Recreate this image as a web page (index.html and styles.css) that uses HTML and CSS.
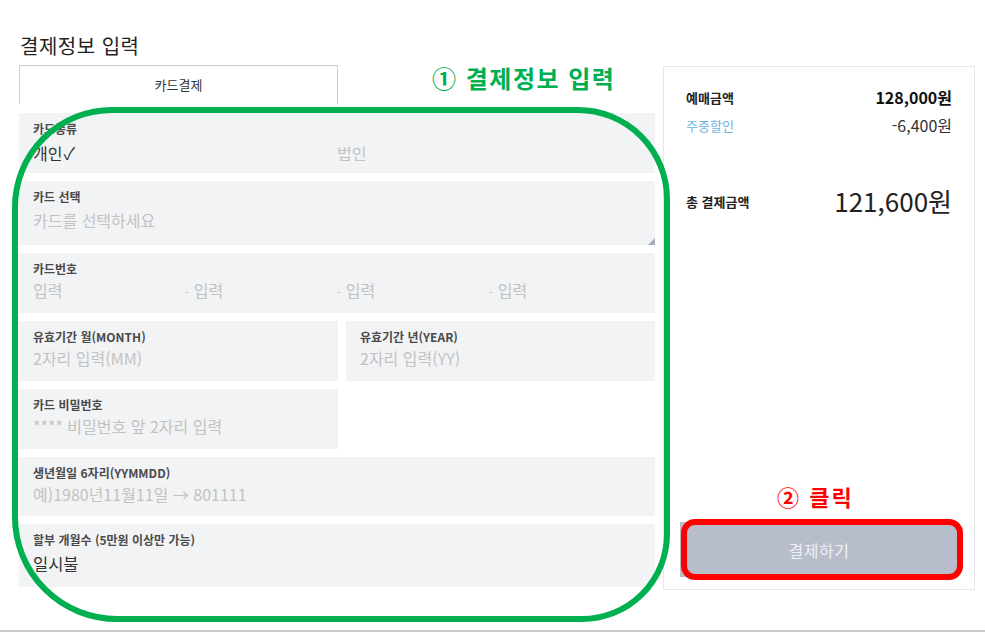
FILE: index.html
```html
<!DOCTYPE html>
<html lang="ko">
<head>
<meta charset="utf-8">
<title>결제정보 입력</title>
<link rel="stylesheet" href="styles.css">
</head>
<body>
<div class="page">
  <h2 class="title">결제정보 입력</h2>
  <div class="main">
    <section class="form">
      <div class="tabs"><div class="tab">카드결제</div></div>
      <div class="fields">
        <div class="field field-kind">
          <div class="label">카드종류</div>
          <div class="options">
            <span class="value">개인<span class="check">✓</span></span>
            <span class="ph">법인</span>
          </div>
        </div>
        <div class="field field-select">
          <div class="label">카드 선택</div>
          <div class="ph">카드를 선택하세요</div>
          <span class="resizer"></span>
        </div>
        <div class="field">
          <div class="label">카드번호</div>
          <div class="cardnum">
            <span class="ph">입력</span>
            <span class="ph"><span class="dash">-</span> 입력</span>
            <span class="ph"><span class="dash">-</span> 입력</span>
            <span class="ph"><span class="dash">-</span> 입력</span>
          </div>
        </div>
        <div class="split">
          <div class="field">
            <div class="label">유효기간 월(MONTH)</div>
            <div class="ph">2자리 입력(MM)</div>
          </div>
          <div class="field">
            <div class="label">유효기간 년(YEAR)</div>
            <div class="ph">2자리 입력(YY)</div>
          </div>
        </div>
        <div class="split">
          <div class="field">
            <div class="label">카드 비밀번호</div>
            <div class="ph">**** 비밀번호 앞 2자리 입력</div>
          </div>
        </div>
        <div class="field field-short">
          <div class="label">생년월일 6자리(YYMMDD)</div>
          <div class="ph">예)1980년11월11일 → 801111</div>
        </div>
        <div class="field field-install">
          <div class="label">할부 개월수 (5만원 이상만 가능)</div>
          <div class="value">일시불</div>
        </div>
      </div>
    </section>
    <aside class="summary">
      <div class="sum-row">
        <span class="sum-label strong">예매금액</span>
        <span class="sum-amount strong">128,000원</span>
      </div>
      <div class="sum-row">
        <span class="sum-label discount">주중할인</span>
        <span class="sum-amount">-6,400원</span>
      </div>
      <div class="sum-row total">
        <span class="sum-label strong">총 결제금액</span>
        <span class="total-amount">121,600원</span>
      </div>
      <button class="pay">결제하기</button>
    </aside>
  </div>
  <div class="note note-green">① 결제정보 입력</div>
  <div class="note note-red">② 클릭</div>
  <div class="frame frame-green"></div>
  <div class="frame frame-red"></div>
</div>
<div class="footer"></div>
</body>
</html>
```
FILE: styles.css
```css
* { box-sizing: border-box; }
html, body { margin: 0; padding: 0; background: #fff; }
body {
  width: 985px;
  height: 632px;
  overflow: hidden;
  font-family: "Noto Sans CJK KR", "Noto Sans", sans-serif;
  color: #333;
}
.page {
  position: relative;
  height: 630px;
  padding: 33px 10px 0 19px;
}
.title {
  margin: 0 0 7px 1px;
  font-size: 20px;
  line-height: 25px;
  font-weight: 400;
  color: #222;
  letter-spacing: 0.5px;
}
.main {
  display: flex;
  gap: 8px;
  align-items: flex-start;
}
.form { width: 636px; }
.tabs { display: flex; }
.tab {
  width: 319px;
  height: 39px;
  border: 1px solid #c9ccd6;
  border-bottom: none;
  text-align: center;
  font-size: 13px;
  line-height: 38px;
  color: #333;
}
.fields {
  margin-top: 9px;
  display: flex;
  flex-direction: column;
  gap: 8px;
}
.field {
  position: relative;
  height: 60px;
  background: #f2f3f5;
  padding: 8px 14px 0;
}
.label {
  font-size: 12px;
  line-height: 16px;
  font-weight: 700;
  color: #4a4a4a;
}
.ph, .value {
  margin-top: 1px;
  font-size: 16px;
  line-height: 24px;
}
.ph { color: #c2c2c2; }
.value { color: #333; }
.check { font-size: 17px; margin-left: 1px; }
.options { display: grid; grid-template-columns: 1fr 1fr; margin-top: 4px; }
.options .ph, .options .value { margin-top: 0; }
.field-kind { height: 60px; }
.field-select { height: 64px; }
.field-select .ph { margin-top: 3px; }
.resizer {
  position: absolute;
  right: 0;
  bottom: 0;
  width: 0;
  height: 0;
  border-left: 7px solid transparent;
  border-bottom: 7px solid #a4abbb;
}
.cardnum { display: grid; grid-template-columns: repeat(4, 1fr); }
.cardnum .ph { margin-top: 1px; }
.dash { font-size: 12px; }
.split { display: grid; grid-template-columns: 319px 309px; gap: 8px; }
.field-short { height: 59px; }
.field-install { height: 63px; }
.field-install .value { margin-top: 4px; font-size: 16.5px; }

.summary {
  width: 313px;
  height: 524px;
  margin-top: 1px;
  border: 1px solid #e6e7ea;
  padding: 20px 16px 12px;
  display: flex;
  flex-direction: column;
}
.sum-row {
  display: flex;
  justify-content: space-between;
  align-items: center;
  padding: 0 6px;
  height: 20px;
}
.sum-row + .sum-row { margin-top: 8px; }
.sum-label { font-size: 13px; color: #333; }
.sum-label.strong { font-weight: 700; color: #222; }
.sum-label.discount { color: #6db3df; }
.sum-amount { font-size: 16px; color: #333; }
.sum-amount.strong { font-weight: 700; color: #111; }
.sum-row.total { margin-top: 49px; height: 34px; }
.total-amount { font-size: 26px; color: #222; line-height: 34px; }
.pay {
  margin-top: auto;
  height: 55px;
  border: none;
  background: #b8bdcb;
  color: #eef0f4;
  font-family: inherit;
  font-size: 16px;
  letter-spacing: 0.5px;
}
.footer { height: 2px; background: #c9c9c9; }

.note {
  position: absolute;
  font-weight: 700;
  white-space: nowrap;
}
.note-green {
  left: 432px;
  top: 62px;
  font-size: 24px;
  line-height: 32px;
  letter-spacing: 1.5px;
  color: #00b050;
}
.note-red {
  left: 777px;
  top: 480px;
  font-size: 22px;
  line-height: 32px;
  letter-spacing: 2px;
  color: #ff0000;
}
.frame { position: absolute; pointer-events: none; }
.frame-green {
  left: 12px;
  top: 107px;
  width: 658px;
  height: 515px;
  border: 6px solid #00b050;
  border-radius: 100px 92px 88px 105px;
}
.frame-red {
  left: 681px;
  top: 519px;
  width: 282px;
  height: 61px;
  border: 6px solid #ff0000;
  border-radius: 14px;
}
```
